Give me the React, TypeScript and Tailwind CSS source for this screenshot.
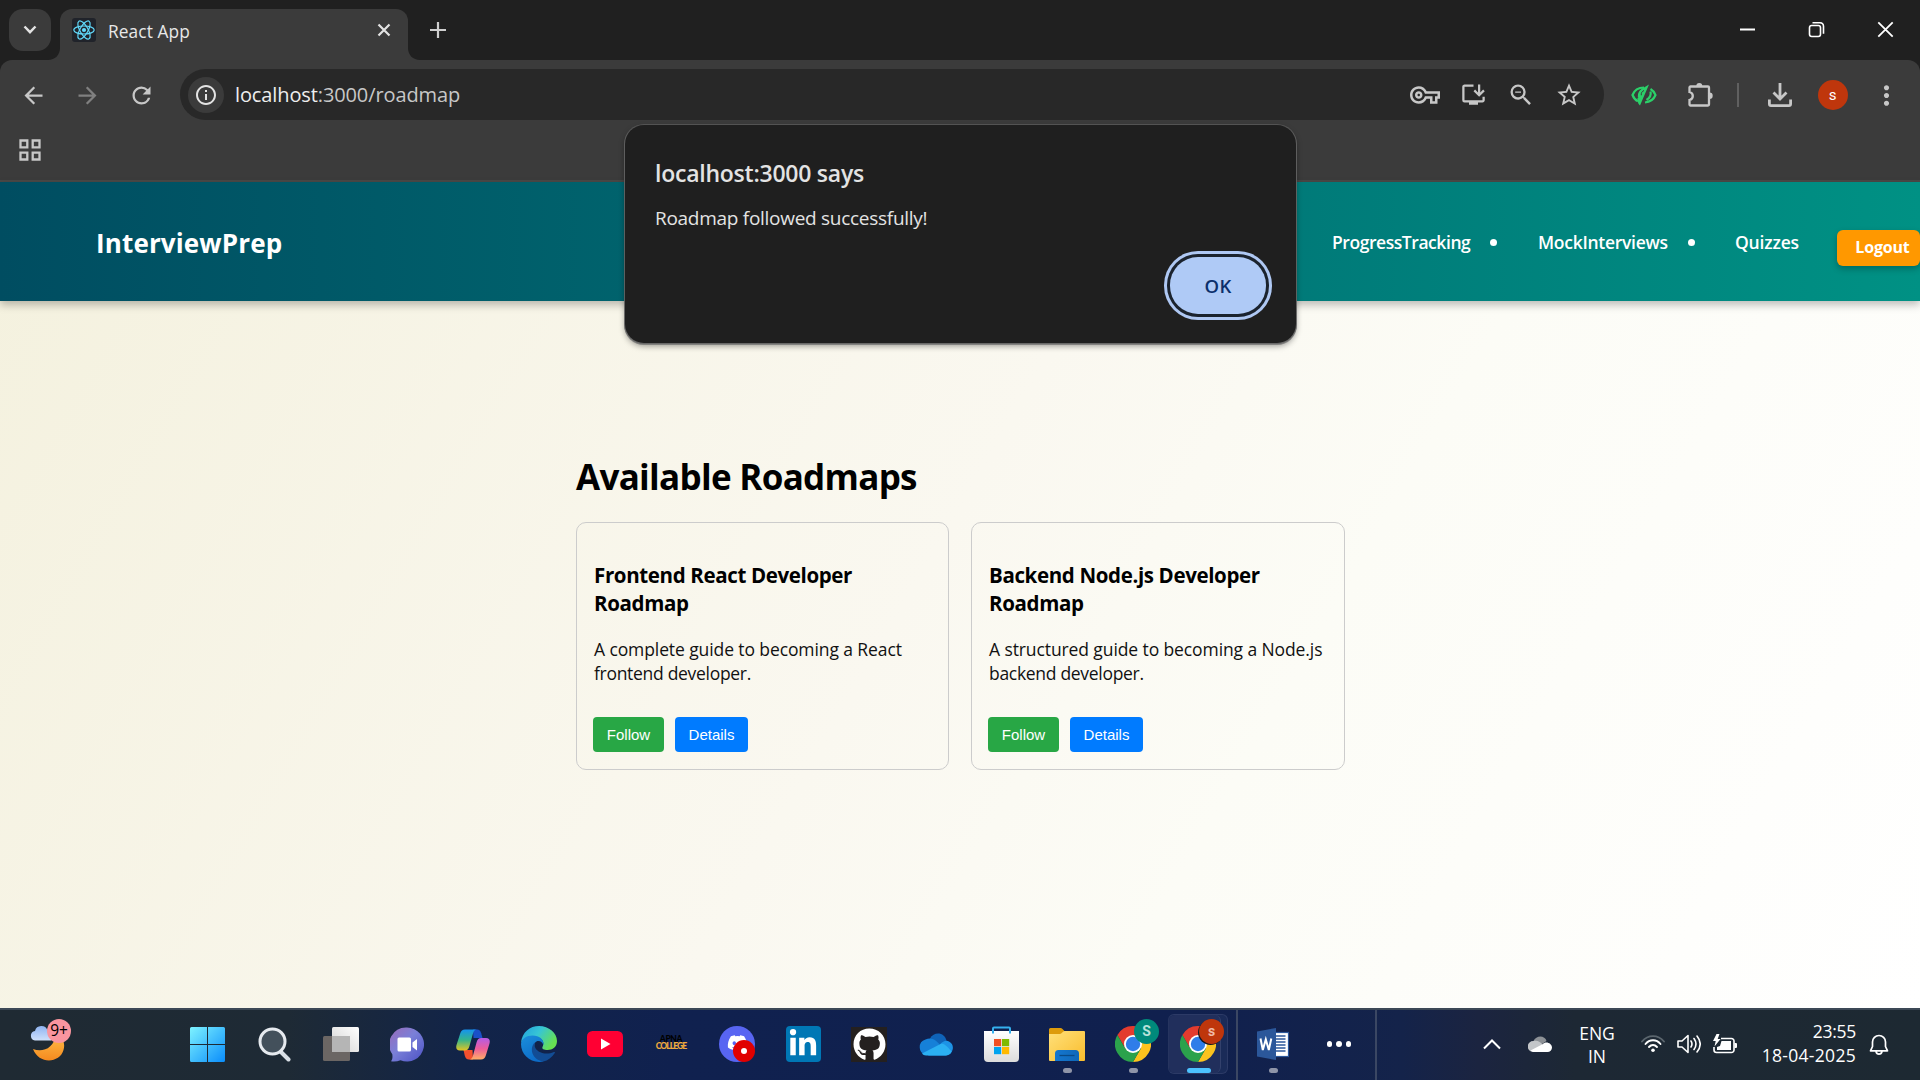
import React from "react";
import {
  MdArrowBack,
  MdArrowForward,
  MdInfoOutline,
  MdInstallDesktop,
  MdMoreVert,
  MdOutlineVpnKey,
  MdRefresh,
  MdStarBorder,
  MdZoomOut,
} from "react-icons/md";
import { FaDiscord, FaGithub, FaLinkedinIn } from "react-icons/fa";

/* ---------- Browser chrome ---------- */

function ReactLogo() {
  return (
    <svg viewBox="0 0 24 24" className="h-6 w-6" fill="none" stroke="#61dafb" strokeWidth="1.2">
      <ellipse cx="12" cy="12" rx="10.2" ry="4" />
      <ellipse cx="12" cy="12" rx="10.2" ry="4" transform="rotate(60 12 12)" />
      <ellipse cx="12" cy="12" rx="10.2" ry="4" transform="rotate(120 12 12)" />
      <circle cx="12" cy="12" r="2.1" fill="#61dafb" stroke="none" />
    </svg>
  );
}

function Flare({ side }: { side: "left" | "right" }) {
  return (
    <svg viewBox="0 0 12 12" className="h-3 w-3 self-end" fill="#3b3b3b">
      {side === "left" ? <path d="M12 0v12H0C7 12 12 7 12 0Z" /> : <path d="M0 0v12h12C5 12 0 7 0 0Z" />}
    </svg>
  );
}

function TabStrip() {
  return (
    <div className="flex h-[60px] bg-[#202020]">
      <div className="mt-[9px] ml-[9px] flex h-[42px] w-[42px] items-center justify-center rounded-[14px] bg-[#3b3b3b]">
        <svg viewBox="0 0 14 10" className="h-[10px] w-[14px]" fill="none" stroke="#e3e3e3" strokeWidth="2.4">
          <path d="M1.5 1.5 7 7.2l5.500-5.700" />
        </svg>
      </div>
      <div className="-ml-[3px] flex">
        <Flare side="left" />
        <div className="mt-[9px] flex h-[51px] w-[348px] items-start rounded-t-xl bg-[#3b3b3b] pl-3">
          <div className="mt-[9px] flex h-6 w-6 items-center justify-center rounded-[3px] bg-[#20232a]">
            <ReactLogo />
          </div>
          <span className="mt-[10px] ml-3 text-[17.3px] leading-[26px] tracking-[0.1px] text-[#e8e8e8]">React App</span>
          <svg viewBox="0 0 14 14" className="mt-[14px] ml-auto mr-[17px] h-[14px] w-[14px]" stroke="#e3e3e3" strokeWidth="2.2">
            <path d="M1.500 1.500l11 11M12.500 1.500l-11 11" />
          </svg>
        </div>
        <Flare side="right" />
      </div>
      <svg viewBox="0 0 16 16" className="mt-[22px] ml-[10px] h-4 w-4" stroke="#cfcfcf" strokeWidth="2.200">
        <path d="M8 0v16M0 8h16" />
      </svg>
      <div className="mt-[21px] mr-[26px] ml-auto flex h-[17px] items-center gap-[52px] text-white">
        <svg viewBox="0 0 17 17" className="h-[17px] w-[17px]" stroke="currentColor" strokeWidth="2">
          <path d="M1 8.500h15" />
        </svg>
        <svg viewBox="0 0 17 17" className="h-[17px] w-[17px]" fill="none" stroke="currentColor" strokeWidth="1.600">
          <rect x="1.500" y="4.500" width="11" height="11" rx="2.200" />
          <path d="M4.500 1.700h7.500a3.600 3.600 0 0 1 3.500 3.500v7.500" />
        </svg>
        <svg viewBox="0 0 17 17" className="h-[17px] w-[17px]" stroke="currentColor" strokeWidth="1.800">
          <path d="M1.300 1.300l14.400 14.400M15.700 1.300L1.300 15.700" />
        </svg>
      </div>
    </div>
  );
}

function Toolbar() {
  return (
    <div className="flex h-[68px] items-center pt-[2px] pl-[6px] text-[#c7c7c7]">
      <div className="flex w-[54px] justify-center pl-[1px]"><MdArrowBack size={27} /></div>
      <div className="flex w-[54px] justify-center pl-[1px] text-[#808080]"><MdArrowForward size={27} /></div>
      <div className="flex w-[54px] justify-center pl-[1px]"><MdRefresh size={27} /></div>
      <div className="-mt-[1px] ml-3 flex h-[51px] w-[1424.5px] items-center rounded-full bg-[#282828] pr-[11px] pl-2">
        <div className="flex h-9 w-9 items-center justify-center rounded-full bg-[#3b3b3b] text-[#e3e3e3]">
          <MdInfoOutline size={24} />
        </div>
        <span className="ml-[11px] text-[20px] tracking-[-0.11px] text-[#c7c7c7]">
          <span className="text-[#eeeeee]">localhost</span>:3000/roadmap
        </span>
        <div className="ml-auto flex items-center">
          <div className="flex w-12 justify-center"><MdOutlineVpnKey size={30} /></div>
          <div className="flex w-12 justify-center"><MdInstallDesktop size={27} /></div>
          <div className="flex w-12 justify-center"><MdZoomOut size={28} /></div>
          <div className="flex w-12 justify-center"><MdStarBorder size={28} /></div>
        </div>
      </div>
      <div className="ml-3 flex w-14 justify-center">
        <svg viewBox="0 0 26 22" className="h-[22px] w-[26px]" fill="none" stroke="#2bd069" strokeWidth="2.200">
          <path d="M13 3.500C7 3.500 3 7 1.500 11c1 2.700 3 5 5.500 6.300M19.500 5c2.400 1.400 4.200 3.500 5 6-1.800 4.500-5.500 7-10.500 7.500" />
          <path d="M18 .5 9 21.500c-1.500-1-2.200-2.500-2-4.200C5.500 13 7 5.500 13 3.500Z" fill="#2bd069" stroke="none" />
          <path d="M19.500 7.500c.8 3.500-.8 6.500-4 8.500" />
          <path d="M13 6.500c-2.200 1-3 2.500-2.700 4.800M6.500 8c-.6 2-.5 4 .3 6" stroke="#3b3b3b" strokeWidth="1" />
        </svg>
      </div>
      <div className="flex w-14 justify-center">
        <svg viewBox="0 0 26 26" className="h-[26px] w-[26px]">
          <path
            d="M3.500 4.500H21a1 1 0 0 1 1 1V22.500a1 1 0 0 1-1 1H3.500a1 1 0 0 1-1-1V18c2-.5 3.300-1.800 3.300-4s-1.300-3.500-3.300-4V5.500a1 1 0 0 1 1-1Z"
            fill="none"
            stroke="currentColor"
            strokeWidth="2.300"
          />
          <path d="M9.300 4a3 3 0 0 1 6 0ZM22.500 10.500a3.200 3.200 0 0 1 0 6.400Z" fill="currentColor" />
        </svg>
      </div>
      <div className="flex w-[19px] justify-center"><div className="h-6 w-[2px] bg-[#606060]" /></div>
      <div className="flex w-[65px] justify-center">
        <svg viewBox="0 0 26 26" className="h-[26px] w-[26px]" fill="none" stroke="currentColor" strokeWidth="2.800">
          <path d="M13 1v15.500M6.500 10.500l6.500 6.500 6.500-6.500M2.400 17.500v4.600a1.600 1.600 0 0 0 1.600 1.600h18a1.600 1.600 0 0 0 1.600-1.600v-4.600" />
        </svg>
      </div>
      <div className="flex w-[41px] justify-center">
        <div className="flex h-[30px] w-[30px] items-center justify-center rounded-full bg-[#bf360c] font-['Roboto'] text-[15px] text-white">s</div>
      </div>
      <div className="flex w-[67px] justify-center"><MdMoreVert size={31} /></div>
    </div>
  );
}

function BookmarksBar() {
  return (
    <div className="flex h-[54px] items-center border-b-2 border-[#4a4846] pb-[8px] pl-[19px]">
      <svg viewBox="0 0 22 22" className="h-[22px] w-[22px]" fill="none" stroke="#c7c7c7" strokeWidth="2.300">
        <path d="M1.500 1.500h6.800v6.800H1.500zM13.700 1.500h6.800v6.800h-6.800zM1.500 13.700h6.800v6.800H1.500zM13.700 13.700h6.800v6.800h-6.800z" />
      </svg>
    </div>
  );
}

/* ---------- Page ---------- */

function NavBar() {
  return (
    <nav className="relative flex h-[119px] items-center bg-linear-to-r from-[#004d61] to-[#009184] pl-[96px] text-white shadow-[0_4px_8px_rgba(0,0,0,0.25)]">
      <span className="mt-1 text-[26px] font-bold tracking-[0.14px]">InterviewPrep</span>
      <div className="mt-[2px] ml-auto flex items-center text-[17.5px] font-semibold">
        <span className="w-[139px] tracking-[-0.44px] whitespace-nowrap">ProgressTracking</span>
        <span className="ml-[19px] h-[7px] w-[7px] rounded-full bg-white" />
        <span className="ml-[41px] w-[130px] tracking-[-0.28px] whitespace-nowrap">MockInterviews</span>
        <span className="ml-[20px] h-[7px] w-[7px] rounded-full bg-white" />
        <span className="ml-[40px] w-[64px] tracking-[-0.17px]">Quizzes</span>
      </div>
      <button className="mt-[13px] ml-[38px] flex h-9 w-[83px] items-center justify-center rounded-md bg-[#ff9800] pb-[3px] pl-[8px] text-[16px] font-bold tracking-[-0.18px] shadow-[0_3px_6px_rgba(0,0,0,0.25)]">
        Logout
      </button>
    </nav>
  );
}

type Roadmap = { title: string[]; text: string[] };

const roadmaps: Roadmap[] = [
  { title: ["Frontend React Developer", "Roadmap"], text: ["A complete guide to becoming a React", "frontend developer."] },
  { title: ["Backend Node.js Developer", "Roadmap"], text: ["A structured guide to becoming a Node.js", "backend developer."] },
];

function RoadmapCard({ title, text }: Roadmap) {
  return (
    <article className="flex h-[248px] flex-col rounded-[10px] border border-[#cccccc] pt-[38px] pl-[17px]">
      <h3 className="text-[20.5px] leading-7 font-bold tracking-[-0.36px] whitespace-nowrap text-black">
        {title.map((line) => <span key={line} className="block">{line}</span>)}
      </h3>
      <p className="mt-5 text-[17.5px] leading-6 tracking-[-0.1px] whitespace-nowrap text-[#111111]">
        {text.map((line, i) => <span key={line} className={i ? "block tracking-[-0.3px]" : "block"}>{line}</span>)}
      </p>
      <div className="mt-8 -ml-[1px] flex gap-[11px] font-['Liberation_Sans'] text-[15px] text-white">
        <button className="h-[35px] w-[71px] rounded bg-[#28a745] pt-[1px]">Follow</button>
        <button className="h-[35px] w-[73px] rounded bg-[#007bff] pt-[1px]">Details</button>
      </div>
    </article>
  );
}

function AlertDialog() {
  return (
    <div className="absolute top-[125px] left-[625px] flex h-[218px] w-[671px] flex-col rounded-[19px] bg-[#1f1f1f] px-[30px] pt-[34px] shadow-[0_0_0_1px_rgba(95,95,95,0.7),0_1px_0_1px_rgba(110,110,110,0.7),0_3px_6px_rgba(0,0,0,0.4)]">
      <h2 className="text-[23px] leading-7 font-semibold tracking-[-0.24px] text-[#e3e3e3]">localhost:3000 says</h2>
      <p className="mt-[17px] text-[19px] leading-7 tracking-[-0.28px] text-[#e3e3e3]">Roadmap followed successfully!</p>
      <button className="mt-[25px] flex h-[57px] w-[96px] items-center justify-center self-end rounded-[28px] bg-[#afcaf6] text-[18.5px] font-semibold tracking-[0.3px] text-[#0b2f6b] shadow-[0_0_0_3px_#1b232e,0_0_0_6px_#afc8f3]">
        OK
      </button>
    </div>
  );
}

/* ---------- Taskbar icons ---------- */

function Weather() {
  return (
    <div className="relative h-10 w-10">
      <svg viewBox="0 0 40 40" className="h-10 w-10">
        <defs>
          <linearGradient id="moon" x1="0" y1="0" x2="0" y2="1"><stop offset="0" stopColor="#ffc04a" /><stop offset="1" stopColor="#f58a1f" /></linearGradient>
          <linearGradient id="wcloud" x1="0" y1="0" x2="0" y2="1"><stop offset="0" stopColor="#8fb4f2" /><stop offset="1" stopColor="#cfe0fb" /></linearGradient>
        </defs>
        <path d="M3 25C12 28.500 24 25.500 26.500 9 33 13 35.500 20 33.500 26 30 39 9 41 3 25Z" fill="url(#moon)" />
        <path d="M5 16.500a4.800 4.800 0 0 1 0-9.500 6.500 6.500 0 0 1 12.500-.5A5 5 0 0 1 21 16.500Z" fill="url(#wcloud)" />
      </svg>
      <span className="absolute -top-[5px] left-[17px] flex h-6 w-6 items-center justify-center rounded-full bg-[#f9959f] text-[15.500px] tracking-[-0.2px] text-black">9+</span>
    </div>
  );
}

function WindowsIcon() {
  return (
    <svg viewBox="0 0 35 35" className="h-[35px] w-[35px]">
      <defs><linearGradient id="win" x1="0" y1="0" x2="1" y2="1"><stop offset="0" stopColor="#7ef3ff" /><stop offset="1" stopColor="#0a8dfb" /></linearGradient></defs>
      <path d="M1.500 0H17v17H0V1.500A1.500 1.500 0 0 1 1.500 0ZM18 0h15.500A1.500 1.500 0 0 1 35 1.500V17H18ZM0 18h17v17H1.500A1.500 1.500 0 0 1 0 33.500ZM18 18h17v15.500a1.500 1.500 0 0 1-1.500 1.500H18Z" fill="url(#win)" />
    </svg>
  );
}

function SearchIcon() {
  return (
    <svg viewBox="0 0 34 35" className="h-[35px] w-[34px]">
      <path d="m22.500 24.500 8 8" stroke="#d9dfe6" strokeWidth="4" strokeLinecap="round" />
      <circle cx="14.500" cy="14.500" r="12.500" fill="#43505b" stroke="#e6eaef" strokeWidth="3" />
    </svg>
  );
}

function TaskViewIcon() {
  return (
    <svg viewBox="0 0 36 36" className="h-9 w-9">
      <defs><linearGradient id="tv" x1="1" y1="0" x2="0" y2="1"><stop offset="0" stopColor="#ffffff" /><stop offset="1" stopColor="#d2d2d2" /></linearGradient></defs>
      <rect x="9" y="1" width="27" height="25" rx="1.500" fill="url(#tv)" />
      <rect x="0" y="10" width="27" height="25" rx="1.500" fill="#6b6664" />
      <path d="M9 10h18v16H9Z" fill="#b5b5b5" />
    </svg>
  );
}

function MeetIcon() {
  return (
    <svg viewBox="0 0 34 35" className="h-[35px] w-[34px]">
      <defs><linearGradient id="meet" x1="0" y1="0" x2="1" y2="1"><stop offset="0" stopColor="#9a6ab8" /><stop offset=".45" stopColor="#7a80d8" /><stop offset="1" stopColor="#4c51c4" /></linearGradient></defs>
      <path d="M17 .5a17 17 0 1 1-6.500 32.700c-3 1.300-6 1.600-9.500 1.100 1.500-1.800 1.700-4 1.300-7A17 17 0 0 1 17 .5Z" fill="url(#meet)" />
      <rect x="7.500" y="10.500" width="13.500" height="14" rx="1.500" fill="#fff" />
      <path d="M22.500 15.500 27 12v11.500l-4.500-3.500Z" fill="#fff" />
    </svg>
  );
}

function CopilotIcon() {
  return (
    <svg viewBox="0 0 34 31" className="h-[31px] w-[34px]">
      <defs>
        <linearGradient id="cpa" x1="0" y1="0" x2="0" y2="1"><stop offset="0" stopColor="#1593f0" /><stop offset=".5" stopColor="#35b58b" /><stop offset="1" stopColor="#e2c523" /></linearGradient>
        <linearGradient id="cpb" x1="0" y1="0" x2="0" y2="1"><stop offset="0" stopColor="#b45ce6" /><stop offset=".5" stopColor="#ee5d9a" /><stop offset="1" stopColor="#ffae66" /></linearGradient>
      </defs>
      <path d="M17 .5h4c2.500 0 3.500 1.500 4.200 3.800L26.500 9h-9Z" fill="#1a50c8" />
      <path d="M17 30.500h-4c-2.500 0-3.500-1.500-4.200-3.800L7.500 21h9Z" fill="#f4502e" />
      <path d="M9 .5h12c-2.200 0-3.200 1.300-4 4l-3.600 12.800c-.9 3-2.200 4.200-4.500 4.200H4c-3.500 0-4.300-2.500-3.500-5.500L4.200 4.500C5 1.800 6.500.5 9 .5Z" fill="url(#cpa)" />
      <path d="M25 30.500H13c2.200 0 3.200-1.300 4-4l3.600-13.300c.9-3 2.200-4.200 4.500-4.200H30c3.500 0 4.300 2.500 3.500 5.500l-3.700 12c-.8 2.700-2.300 4-4.800 4Z" fill="url(#cpb)" />
    </svg>
  );
}

function EdgeIcon() {
  return (
    <svg viewBox="0 0 36 36" className="h-9 w-9">
      <defs>
        <linearGradient id="ega" x1="0" y1="0" x2="1" y2=".5"><stop offset="0" stopColor="#1f9fe0" /><stop offset=".5" stopColor="#37c5d5" /><stop offset="1" stopColor="#66e052" /></linearGradient>
        <linearGradient id="egb" x1="0" y1="0" x2=".5" y2="1"><stop offset="0" stopColor="#1b8fdc" /><stop offset="1" stopColor="#0d6cc8" /></linearGradient>
      </defs>
      <path d="M0 17C1 6 9 0 18 0c10 0 18 7 18 15 0 6-4.500 9-9.500 9-3.500 0-6-1.200-5-3 2-4 .5-8.500-5-9.500C9 10.500 2 12 0 17Z" fill="url(#ega)" />
      <path d="M0 18c.5-5.500 5.500-8.500 11.500-8.500 8 0 12 5 10.800 9.500-.8-2.500-2.500-4-4.800-4-3.500 0-5 3.500-4.500 7.500.7 5.500 4 10.500 9.500 13C10 38 0 29 0 18Z" fill="url(#egb)" />
      <path d="M13.800 16.500c-5.500 5-3.500 17 8.500 19C27 34.500 31 31.500 33.800 27c.5-.8-.2-1.300-1-1-9 4-18-.5-19-5.500Z" fill="#124c94" />
    </svg>
  );
}

function YouTubeIcon() {
  return (
    <svg viewBox="0 0 36 26" className="h-[26px] w-9">
      <rect width="36" height="26" rx="5.500" fill="#ff0033" />
      <path d="m14 7.500 9.500 5.500-9.500 5.500Z" fill="#fff" />
    </svg>
  );
}

function ApnaIcon() {
  return (
    <div className="flex flex-col items-center pb-[3px] font-['Lato'] text-[8.500px] leading-[7px] font-black">
      <span className="tracking-[-0.4px] text-black">APNA</span>
      <span className="tracking-[-0.900px] text-[#f2ab3c]">COLLEGE</span>
    </div>
  );
}

function DiscordIcon() {
  return (
    <div className="relative flex h-9 w-9 items-center justify-center rounded-full bg-[#5865f2] text-white">
      <FaDiscord size={21} className="-mt-1" />
      <span className="absolute right-0 bottom-0 flex h-[22px] w-[22px] items-center justify-center rounded-full bg-[#e00000]">
        <span className="h-[6px] w-[6px] rounded-full bg-white" />
      </span>
    </div>
  );
}

function OneDriveIcon() {
  return (
    <svg viewBox="0 0 35 23" className="h-[23px] w-[35px]">
      <path d="M12 5.500C16-2 27-1 28.500 8c-6 4-10 5-16.500 3Z" fill="#0f63b8" />
      <path d="M8 22a8 8 0 0 1-.5-15.500C14 3.500 19 8 23 13l-3 9Z" fill="#1680d8" />
      <path d="M22 11.500c3-4 7-4.500 9-3A7.500 7.500 0 0 1 28 22.500H10Z" fill="#1d93e6" />
      <path d="M4 20.500 22.500 11c3-1 6 1.500 11 7.500-1 2.500-3.500 4-6 4H8c-2 0-3-.8-4-2Z" fill="#2bb0f3" />
    </svg>
  );
}

function StoreIcon() {
  return (
    <svg viewBox="0 0 35 36" className="h-9 w-[35px]">
      <defs><linearGradient id="store" x1="0" y1="0" x2="0" y2="1"><stop offset="0" stopColor="#fff" /><stop offset="1" stopColor="#dcdcdc" /></linearGradient></defs>
      <path d="M0 5h35v27a4 4 0 0 1-4 4H4a4 4 0 0 1-4-4Z" fill="url(#store)" />
      <path d="M9 7.500V2.500a1 1 0 0 1 1-1h15a1 1 0 0 1 1 1v5" fill="none" stroke="#35b0ee" strokeWidth="2" />
      <path d="M10 13h7.200v7.200H10z" fill="#f25022" />
      <path d="M18 13h7.200v7.200H18z" fill="#7fba00" />
      <path d="M10 21h7.200v7.200H10z" fill="#00a4ef" />
      <path d="M18 21h7.200v7.200H18z" fill="#ffb900" />
    </svg>
  );
}

function ExplorerIcon() {
  return (
    <svg viewBox="0 0 36 33" className="h-[33px] w-9">
      <defs>
        <linearGradient id="fold" x1="0" y1="0" x2="1" y2="1"><stop offset="0" stopColor="#ffe07a" /><stop offset="1" stopColor="#f9bd2d" /></linearGradient>
        <linearGradient id="foldb" x1="0" y1="0" x2="1" y2="0"><stop offset="0" stopColor="#1577d0" /><stop offset="1" stopColor="#0f68b8" /></linearGradient>
      </defs>
      <path d="M1.500 0h10c1.500 0 2.500 1.500 4 3v5H0V1.500A1.500 1.500 0 0 1 1.500 0Z" fill="#dd9b0c" />
      <path d="M0 6h11c1.500 0 3-3 4.500-3H35a1 1 0 0 1 1 1v28a1 1 0 0 1-1 1H1a1 1 0 0 1-1-1Z" fill="url(#fold)" />
      <path d="M6 33v-7.500a3.500 3.500 0 0 1 3.500-3.500h17a3.500 3.500 0 0 1 3.500 3.500V33Z" fill="url(#foldb)" />
      <path d="M10.500 27.500h15" stroke="#0a4a86" strokeWidth="1.300" />
    </svg>
  );
}

function ChromeIcon({ letter, active }: { letter: string; active?: boolean }) {
  return (
    <div className="relative h-9 w-9">
      <svg viewBox="0 0 36 36" className="h-9 w-9">
        <path d="M18 9h15.590A18 18 0 0 1 18 36l7.800-13.500Z" fill="#fcc31e" />
        <path d="M2.410 9A18 18 0 0 1 33.590 9H18l-7.800 13.500Z" fill="#e33b2e" />
        <path d="M2.410 9 10.200 22.500 25.800 22.500 18 36A18 18 0 0 1 2.410 9Z" fill="#2ba24c" />
        <circle cx="18" cy="18" r="9" fill="#fff" />
        <circle cx="18" cy="18" r="7.200" fill="#2f7de9" />
      </svg>
      {active ? (
        <span className="absolute -top-[7px] left-[19px] flex h-[25px] w-[25px] items-center justify-center rounded-full bg-[#bf360c] font-['Roboto'] text-[14px] font-bold text-[#f0b9a6] shadow-[-1px_1px_0_0_#14161f]">{letter}</span>
      ) : (
        <span className="absolute -top-[7px] left-[19px] flex h-[25px] w-[25px] items-center justify-center rounded-full bg-[#00897b] font-['Roboto'] text-[14px] font-bold text-[#b8e2da]">{letter}</span>
      )}
    </div>
  );
}

function WordIcon() {
  return (
    <svg viewBox="0 0 32 32" className="h-8 w-8">
      <rect x="14" y="4.500" width="17.500" height="24" fill="#fff" stroke="#2b579a" strokeWidth="1.200" />
      <path d="M19 8h9.500M19 11h9.500M19 14h9.500M19 17h9.500M19 20h9.500M19 23h9.500" stroke="#2b579a" strokeWidth="1.400" />
      <path d="M0 3.500 19 0v32L0 28.500Z" fill="#2b579a" />
      <path d="m3.500 10.500 2.300 11.500 3-10.500 3 10.500 2.500-11.500" fill="none" stroke="#fff" strokeWidth="2" />
    </svg>
  );
}

function TaskCell({ children, dot }: { children: React.ReactNode; dot?: boolean }) {
  return (
    <div className="relative flex h-[68px] w-[66px] items-center justify-center">
      {children}
      {dot && <span className="absolute bottom-[5px] left-[29px] h-[5px] w-[9px] rounded-full bg-[#8f95a8]" />}
    </div>
  );
}

function Tray() {
  return (
    <div className="ml-auto flex h-[68px] items-center pr-[18px] text-[17.5px] text-white">
      <div className="flex w-12 justify-center">
        <svg viewBox="0 0 18 11" className="h-[11px] w-[18px]" fill="none" stroke="currentColor" strokeWidth="2"><path d="m1 9.500 8-8 8 8" /></svg>
      </div>
      <div className="flex w-12 justify-center">
        <svg viewBox="0 0 24 16" className="h-4 w-6">
          <path d="M5.500 5C8-1 17-1 18.500 5l-6 4Z" fill="#8d9196" />
          <path d="M5 16A5.300 5.300 0 0 1 5.500 5c3-1 6.500 0 9 3.500L8 16Z" fill="#c3c6c9" />
          <path d="m2.500 14.500 12-6.300c3.500-3.700 9.500-.7 9.500 3.300 0 2.500-2 4.500-4.500 4.500H5Z" fill="#fff" />
        </svg>
      </div>
      <div className="mt-[2px] mr-[5px] flex w-[66px] flex-col items-center text-center leading-[23px] tracking-[-0.1px]">
        <span>ENG</span>
        <span>IN</span>
      </div>
      <div className="flex w-9 justify-center">
        <svg viewBox="0 0 24 18" className="h-[18px] w-6" fill="none" stroke="currentColor" strokeWidth="1.900" strokeLinecap="round">
          <path d="M1 6.500C7-.7 17-.7 23 6.500" stroke="#5b666e" />
          <path d="M4.500 9c4-5 11-5 15 0M8 12c2.300-2.600 5.700-2.600 8 0" />
          <circle cx="12" cy="15.200" r="1.800" fill="currentColor" stroke="none" />
        </svg>
      </div>
      <div className="flex w-9 justify-center">
        <svg viewBox="0 0 24 20" className="h-5 w-6" fill="none" stroke="currentColor" strokeWidth="1.600" strokeLinecap="round" strokeLinejoin="round">
          <path d="M1 7h4l6-5.500v17L5 13H1ZM14 7c1.300 2 1.300 4 0 6M17 4.500c2.500 3.500 2.500 7.500 0 11M20 2c4 5 4 11 0 16" />
        </svg>
      </div>
      <div className="flex w-9 justify-center">
        <svg viewBox="0 0 24 20" className="h-5 w-6">
          <path d="M8 4.500h10.500A2.500 2.500 0 0 1 21 7v9a2.500 2.500 0 0 1-2.500 2.500h-15A2.500 2.500 0 0 1 1 16v-3" fill="none" stroke="currentColor" strokeWidth="1.600" />
          <path d="M8.500 7H18v9H4v-3l3-1ZM21.500 9H23a1 1 0 0 1 1 1v3a1 1 0 0 1-1 1h-1.500ZM3.500 0 0 7h2.700L1.500 12.500 7.500 5H4.700L6.500 0Z" fill="currentColor" />
        </svg>
      </div>
      <div className="mb-[2px] flex w-[113px] flex-col items-end leading-6">
        <span className="tracking-[-0.28px]">23:55</span>
        <span className="tracking-[0.3px]">18-04-2025</span>
      </div>
      <div className="flex w-[46px] justify-center">
        <svg viewBox="0 0 20 23" className="h-[23px] w-5" fill="none" stroke="currentColor" strokeWidth="1.700" strokeLinejoin="round">
          <path d="M3.500 9a6.500 6.500 0 0 1 13 0v4.500l2 4.300h-17l2-4.300ZM7 18.500c.8 3.500 5.200 3.500 6 0" />
        </svg>
      </div>
    </div>
  );
}

function Taskbar() {
  return (
    <footer className="flex h-[72px] border-t-2 border-[#3c4856] bg-[linear-gradient(90deg,#1f2a33_0%,#1e2a35_15%,#122448_24%,#10214f_35%,#10204e_62%,#14234a_73%,#1b2440_77%,#1d2834_82%,#1d2932_100%)]">
      <div className="w-[174px] pt-[14px] pl-[30px]"><Weather /></div>
      <TaskCell><WindowsIcon /></TaskCell>
      <div className="ml-[2px] flex">
        <TaskCell><SearchIcon /></TaskCell>
        <TaskCell><TaskViewIcon /></TaskCell>
        <TaskCell><MeetIcon /></TaskCell>
        <TaskCell><CopilotIcon /></TaskCell>
        <TaskCell><EdgeIcon /></TaskCell>
        <TaskCell><YouTubeIcon /></TaskCell>
        <TaskCell><ApnaIcon /></TaskCell>
        <TaskCell><DiscordIcon /></TaskCell>
        <TaskCell>
          <div className="flex h-9 w-[35px] items-center justify-center rounded-[4px] bg-[#0077b5] text-white"><FaLinkedinIn size={30} /></div>
        </TaskCell>
        <TaskCell>
          <div className="flex h-[35px] w-9 items-center justify-center bg-[#24201f] text-white"><FaGithub size={33} /></div>
        </TaskCell>
        <TaskCell><OneDriveIcon /></TaskCell>
        <TaskCell><StoreIcon /></TaskCell>
        <TaskCell dot><ExplorerIcon /></TaskCell>
        <TaskCell dot><ChromeIcon letter="S" /></TaskCell>
        <TaskCell>
          <div className="relative ml-[-2px] flex h-[60px] w-[60px] items-center justify-center rounded-[6px] border border-[#2c3a66] border-l-[#26345f] bg-[#1a2b58]">
            <div className="absolute top-0 left-0 h-[58px] w-[52px] rounded-[6px] border-r border-[#33416c] bg-[#212f5c]" />
            <ChromeIcon letter="s" active />
            <span className="absolute bottom-0 left-[18px] h-[5px] w-6 rounded-full bg-[#4cc2ff]" />
          </div>
        </TaskCell>
      </div>
      <div className="ml-[4px] h-[70px] w-[2px] bg-[#3b4763]" />
      <div className="ml-[2px] flex">
        <TaskCell dot><WordIcon /></TaskCell>
        <TaskCell>
          <div className="flex gap-[4px]">
            <span className="h-[5.500px] w-[5.500px] rounded-full bg-white" />
            <span className="h-[5.500px] w-[5.500px] rounded-full bg-white" />
            <span className="h-[5.500px] w-[5.500px] rounded-full bg-white" />
          </div>
        </TaskCell>
      </div>
      <div className="ml-[3px] h-[70px] w-[2px] bg-[#3b4763]" />
      <Tray />
    </footer>
  );
}

export default function App() {
  return (
    <div className="relative flex h-[1080px] w-[1920px] flex-col overflow-hidden bg-[#202020] font-['Open_Sans',sans-serif]">
      <TabStrip />
      <header className="rounded-t-[12px] bg-[#3b3b3b]">
        <Toolbar />
        <BookmarksBar />
      </header>
      <div className="flex h-[826px] flex-col bg-[linear-gradient(120deg,#f4f1de_0%,#faf8f0_48%,#fcfcf6_66%,#ffffff_100%)]">
        <NavBar />
        <main className="ml-[576px] w-[769px] pt-[152px]">
          <h1 className="text-[35px] leading-[48px] font-bold tracking-[-0.7px] text-black">Available Roadmaps</h1>
          <div className="mt-[21px] grid grid-cols-[373px_374px] gap-[22px]">
            {roadmaps.map((r) => <RoadmapCard key={r.title[0]} {...r} />)}
          </div>
        </main>
      </div>
      <Taskbar />
      <AlertDialog />
    </div>
  );
}
